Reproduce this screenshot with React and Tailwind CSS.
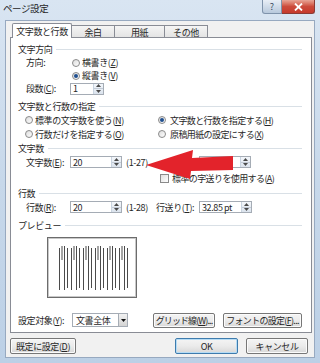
import React from 'react';

function U({ children }) {
  return <span className="underline">{children}</span>;
}

function Radio({ checked }) {
  return (
    <span className="inline-flex w-[8px] h-[8px] rounded-full border border-[#8a8a8a] bg-gradient-to-br from-[#dcdcdc] to-[#ffffff] items-center justify-center shrink-0">
      {checked && <span className="w-[4px] h-[4px] rounded-full bg-[#1f4f8f]" />}
    </span>
  );
}

function Spin() {
  return (
    <div className="w-[10px] h-full flex flex-col border-l border-[#c9d4e0] bg-gradient-to-b from-[#f4f7fb] to-[#dbe3ed] shrink-0">
      <div className="flex-1 flex items-center justify-center border-b border-[#c3cbd6]">
        <svg width="5" height="3" viewBox="0 0 5 3"><path d="M0 3 L2.5 0 L5 3Z" fill="#4a4a4a" /></svg>
      </div>
      <div className="flex-1 flex items-center justify-center">
        <svg width="5" height="3" viewBox="0 0 5 3"><path d="M0 0 L2.5 3 L5 0Z" fill="#4a4a4a" /></svg>
      </div>
    </div>
  );
}

function SpinInput({ value, className }) {
  return (
    <div className={'flex h-[12px] border border-[#a5acb5] bg-white shrink-0 ' + className}>
      <span className="flex-1 pl-[2px] flex items-center">{value}</span>
      <Spin />
    </div>
  );
}

function Header({ children, className }) {
  return (
    <div className={'h-[14px] flex items-center ' + (className || '')}>
      <span>{children}</span>
      <div className="flex-1 h-px bg-[#d9e0e6] ml-[4px]" />
    </div>
  );
}

function Btn({ children, className, focus }) {
  return (
    <div
      className={
        'h-[15px] flex items-center justify-center rounded-[2px] border bg-gradient-to-b from-[#f4f4f4] via-[#ebebeb] to-[#d8d8d8] ' +
        (focus ? 'border-[#3d7bad] shadow-[inset_0_0_0_1px_#b6dcf5] ' : 'border-[#777777] shadow-[inset_0_0_0_1px_#fbfbfb] ') +
        className
      }
    >
      {children}
    </div>
  );
}

export default function App() {
  const groups = [11, 23, 35, 47, 59, 71];
  return (
    <div className="relative w-[320px] h-[363px] overflow-hidden whitespace-nowrap bg-gradient-to-b from-[#d9e5f2] via-[#c7d8ea] to-[#bcd0e6] flex flex-col font-['Noto_Sans_CJK_JP','Noto_Sans',sans-serif] text-[9px] leading-none text-[#262626] tracking-[-0.4px]">
      {/* title bar */}
      <div className="h-[20px] flex items-start shrink-0">
        <span className="ml-[3px] mt-[4px] text-[9.5px]">ページ設定</span>
        <div className="ml-auto mr-[5px] flex">
          <div className="w-[20px] h-[14px] rounded-bl-[3px] border border-t-0 border-[#7f93ab] bg-gradient-to-b from-[#e8eef6] to-[#b8c9dc] flex items-center justify-center text-[9px] text-[#3b4a5e] tracking-normal">
            ?
          </div>
          <div className="w-[33px] h-[14px] rounded-br-[3px] border border-t-0 border-l-0 border-[#8a3b35] bg-gradient-to-b from-[#e7a597] via-[#cc4b3c] to-[#c63a2c] flex items-center justify-center">
            <svg width="9" height="8" viewBox="0 0 9 8">
              <path d="M1 0.5 L8 7.5 M8 0.5 L1 7.5" stroke="#ffffff" strokeWidth="1.8" />
            </svg>
          </div>
        </div>
      </div>

      {/* client area */}
      <div className="flex-1 mx-[5px] mb-[5px] bg-[#f1f1f1] border border-[#97a9c0] flex flex-col">
        <div className="ml-[4px] mr-[2px] mt-[2px] flex flex-col">
          {/* tabs */}
          <div className="h-[15px] flex items-end pl-[2px] -mb-px">
            <div className="relative z-10 w-[60px] h-[15px] bg-white border border-b-0 border-[#898c95] flex items-center justify-center rounded-t-[2px]">
              文字数と行数
            </div>
            <div className="w-[44px] -ml-px h-[13px] border border-b-0 border-[#898c95] bg-gradient-to-b from-[#f5f5f5] to-[#e2e2e2] flex items-center justify-center">
              余白
            </div>
            <div className="w-[51px] -ml-px h-[13px] border border-b-0 border-[#898c95] bg-gradient-to-b from-[#f5f5f5] to-[#e2e2e2] flex items-center justify-center">
              用紙
            </div>
            <div className="w-[44px] -ml-px h-[13px] border border-b-0 border-[#898c95] bg-gradient-to-b from-[#f5f5f5] to-[#e2e2e2] flex items-center justify-center">
              その他
            </div>
          </div>

          {/* panel */}
          <div className="h-[296px] bg-white border border-[#898c95] pl-[7px] pr-[9px] pt-[4px] flex flex-col">
            <Header>文字方向</Header>
            <div className="h-[13px] flex items-center ml-[8px]">
              <span className="w-[46px]">方向:</span>
              <Radio />
              <span className="ml-[2px]">横書き(<U>Z</U>)</span>
            </div>
            <div className="h-[13px] flex items-center ml-[54px]">
              <Radio checked />
              <span className="ml-[2px]">縦書き(<U>V</U>)</span>
            </div>
            <div className="h-[13px] flex items-center ml-[8px]">
              <span className="w-[44px]">段数(<U>C</U>):</span>
              <SpinInput value="1" className="w-[34px] h-[11px]" />
            </div>

            <Header className="mt-[4px]">文字数と行数の指定</Header>
            <div className="h-[14px] flex items-center ml-[7px]">
              <div className="w-[133px] flex items-center">
                <Radio />
                <span className="ml-[2px]">標準の文字数を使う(<U>N</U>)</span>
              </div>
              <Radio checked />
              <span className="ml-[4px] tracking-[-0.6px]">文字数と行数を指定する(<U>H</U>)</span>
            </div>
            <div className="h-[14px] flex items-center ml-[7px]">
              <div className="w-[133px] flex items-center">
                <Radio />
                <span className="ml-[2px]">行数だけを指定する(<U>O</U>)</span>
              </div>
              <Radio />
              <span className="ml-[4px] tracking-[-0.6px]">原稿用紙の設定にする(<U>X</U>)</span>
            </div>

            <Header>文字数</Header>
            <div className="h-[14px] flex items-center ml-[8px]">
              <div className="w-[130px] flex items-center">
                <span className="w-[44px]">文字数(<U>E</U>):</span>
                <SpinInput value="20" className="w-[52px] border-[#6f9fcf]" />
                <span className="ml-[4px]">(1-27)</span>
              </div>
              <span className="w-[43px]" />
              <SpinInput value="" className="w-[52px]" />
            </div>
            <div className="h-[14px] mt-[2px] flex items-center ml-[142px]">
              <span className="w-[9px] h-[9px] border border-[#8a8a8a] bg-gradient-to-br from-[#dedede] to-[#ffffff] shrink-0" />
              <span className="ml-[3px] tracking-[-0.6px]">標準の字送りを使用する(<U>A</U>)</span>
            </div>

            <Header className="mt-[1px]">行数</Header>
            <div className="h-[14px] flex items-center ml-[8px]">
              <div className="w-[130px] flex items-center">
                <span className="w-[44px]">行数(<U>R</U>):</span>
                <SpinInput value="20" className="w-[52px]" />
                <span className="ml-[4px]">(1-28)</span>
              </div>
              <span className="w-[43px]">行送り(<U>T</U>):</span>
              <SpinInput value="32.85 pt" className="w-[53px]" />
            </div>

            <Header className="mt-[4px]">プレビュー</Header>
            <div className="mt-[5px] ml-[29px] w-[90px] h-[61px] border border-[#6c6c6c] shadow-[inset_0_0_0_1px_#c8c8c8] bg-white shrink-0">
              <svg width="88" height="59" viewBox="0 0 88 59">
                {groups.map((g) => (
                  <g key={g} stroke="#4b4b4b" strokeWidth="1">
                    <line x1={g + 0.5} y1="10" x2={g + 0.5} y2="52" />
                    <line x1={g + 3} y1="8" x2={g + 3} y2="22" />
                    <line x1={g + 5.5} y1="8" x2={g + 5.5} y2="52" />
                    <line x1={g + 8.5} y1="10" x2={g + 8.5} y2="50" />
                  </g>
                ))}
              </svg>
            </div>

            <div className="mt-[15px] h-[14px] flex items-center">
              <span className="w-[54px]">設定対象(<U>Y</U>):</span>
              <div className="w-[56px] h-[14px] border border-[#a5acb5] bg-white flex">
                <span className="flex-1 pl-[3px] flex items-center">文書全体</span>
                <div className="w-[9px] border-l border-[#a5acb5] bg-gradient-to-b from-[#f2f2f2] to-[#d4d4d4] flex items-center justify-center">
                  <svg width="5" height="3" viewBox="0 0 5 3"><path d="M0 0 L2.5 3 L5 0Z" fill="#111" /></svg>
                </div>
              </div>
              <Btn className="ml-[25px] w-[62px] h-[14px] tracking-[-0.9px]">グリッド線(<U>W</U>)...</Btn>
              <Btn className="ml-[8px] w-[79px] h-[14px] tracking-[-0.7px]">フォントの設定(<U>F</U>)...</Btn>
            </div>
          </div>

          {/* bottom buttons */}
          <div className="mt-[5px] flex items-center pr-[4px]">
            <Btn className="w-[66px] h-[16px]">既定に設定(<U>D</U>)</Btn>
            <Btn focus className="ml-auto w-[63px] h-[16px]">OK</Btn>
            <Btn className="ml-[8px] w-[62px] h-[16px]">キャンセル</Btn>
          </div>
        </div>
      </div>

      {/* red arrow annotation */}
      <svg className="absolute left-0 top-0 pointer-events-none" width="320" height="363" viewBox="0 0 320 363">
        <polygon points="146,165 193,150 192,158 233,156 233,170 191,171 190,179" fill="#e3232b" />
      </svg>
    </div>
  );
}
